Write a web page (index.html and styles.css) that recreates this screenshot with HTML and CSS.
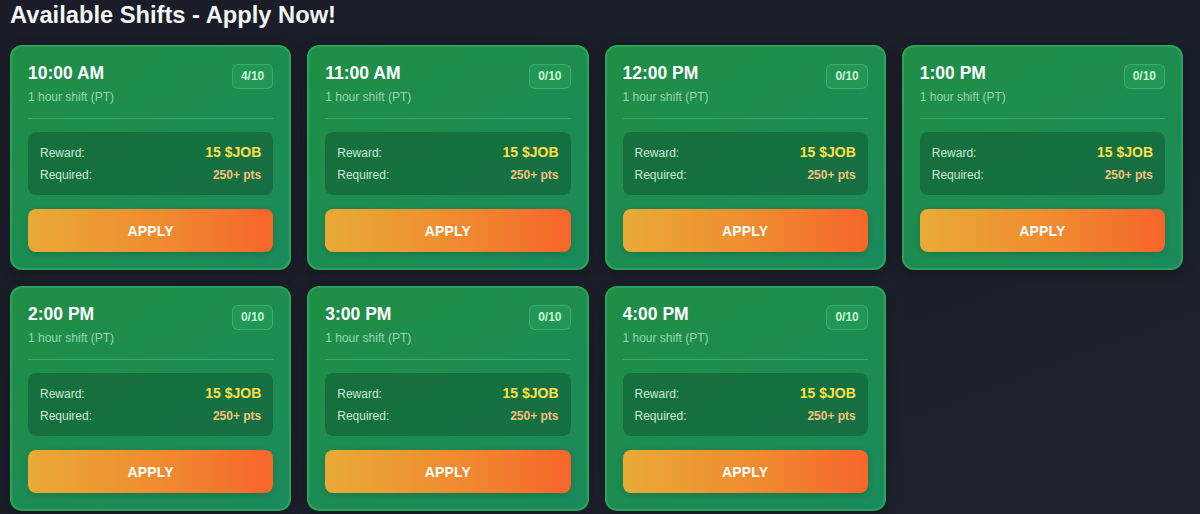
FILE: index.html
```html
<!DOCTYPE html>
<html lang="en">
<head>
<meta charset="utf-8">
<title>Available Shifts</title>
<link rel="stylesheet" href="styles.css">
</head>
<body>
<main class="page">
  <h1 class="page-title">Available Shifts - Apply Now!</h1>
  <section class="shift-grid">
    <article class="shift-card">
      <header class="shift-head">
        <div><h2 class="shift-time">10:00 AM</h2><p class="shift-sub">1 hour shift (PT)</p></div>
        <span class="shift-badge">4/10</span>
      </header>
      <div class="shift-info">
        <div class="info-row"><span class="info-label">Reward:</span><span class="info-reward">15 $JOB</span></div>
        <div class="info-row"><span class="info-label">Required:</span><span class="info-req">250+ pts</span></div>
      </div>
      <button class="apply-btn">APPLY</button>
    </article>
    <article class="shift-card">
      <header class="shift-head">
        <div><h2 class="shift-time">11:00 AM</h2><p class="shift-sub">1 hour shift (PT)</p></div>
        <span class="shift-badge">0/10</span>
      </header>
      <div class="shift-info">
        <div class="info-row"><span class="info-label">Reward:</span><span class="info-reward">15 $JOB</span></div>
        <div class="info-row"><span class="info-label">Required:</span><span class="info-req">250+ pts</span></div>
      </div>
      <button class="apply-btn">APPLY</button>
    </article>
    <article class="shift-card">
      <header class="shift-head">
        <div><h2 class="shift-time">12:00 PM</h2><p class="shift-sub">1 hour shift (PT)</p></div>
        <span class="shift-badge">0/10</span>
      </header>
      <div class="shift-info">
        <div class="info-row"><span class="info-label">Reward:</span><span class="info-reward">15 $JOB</span></div>
        <div class="info-row"><span class="info-label">Required:</span><span class="info-req">250+ pts</span></div>
      </div>
      <button class="apply-btn">APPLY</button>
    </article>
    <article class="shift-card">
      <header class="shift-head">
        <div><h2 class="shift-time">1:00 PM</h2><p class="shift-sub">1 hour shift (PT)</p></div>
        <span class="shift-badge">0/10</span>
      </header>
      <div class="shift-info">
        <div class="info-row"><span class="info-label">Reward:</span><span class="info-reward">15 $JOB</span></div>
        <div class="info-row"><span class="info-label">Required:</span><span class="info-req">250+ pts</span></div>
      </div>
      <button class="apply-btn">APPLY</button>
    </article>
    <article class="shift-card">
      <header class="shift-head">
        <div><h2 class="shift-time">2:00 PM</h2><p class="shift-sub">1 hour shift (PT)</p></div>
        <span class="shift-badge">0/10</span>
      </header>
      <div class="shift-info">
        <div class="info-row"><span class="info-label">Reward:</span><span class="info-reward">15 $JOB</span></div>
        <div class="info-row"><span class="info-label">Required:</span><span class="info-req">250+ pts</span></div>
      </div>
      <button class="apply-btn">APPLY</button>
    </article>
    <article class="shift-card">
      <header class="shift-head">
        <div><h2 class="shift-time">3:00 PM</h2><p class="shift-sub">1 hour shift (PT)</p></div>
        <span class="shift-badge">0/10</span>
      </header>
      <div class="shift-info">
        <div class="info-row"><span class="info-label">Reward:</span><span class="info-reward">15 $JOB</span></div>
        <div class="info-row"><span class="info-label">Required:</span><span class="info-req">250+ pts</span></div>
      </div>
      <button class="apply-btn">APPLY</button>
    </article>
    <article class="shift-card">
      <header class="shift-head">
        <div><h2 class="shift-time">4:00 PM</h2><p class="shift-sub">1 hour shift (PT)</p></div>
        <span class="shift-badge">0/10</span>
      </header>
      <div class="shift-info">
        <div class="info-row"><span class="info-label">Reward:</span><span class="info-reward">15 $JOB</span></div>
        <div class="info-row"><span class="info-label">Required:</span><span class="info-req">250+ pts</span></div>
      </div>
      <button class="apply-btn">APPLY</button>
    </article>
  </section>
</main>
</body>
</html>
```
FILE: styles.css
```css
* { box-sizing: border-box; }
html, body { margin: 0; padding: 0; }
body {
  background: linear-gradient(160deg, #1a1d27 0%, #1b1f2a 60%, #1d222c 100%);
  min-height: 514px;
  font-family: "Liberation Sans", Arial, sans-serif;
  color: #fff;
  overflow: hidden;
}
.page { padding: 1px 0 0 10px; width: 1183px; }
.page-title {
  margin: 0 0 16px;
  font-size: 23.7px;
  font-weight: 700;
  line-height: 28px;
  color: #f5f6f8;
}
.shift-grid {
  display: grid;
  grid-template-columns: repeat(4, 1fr);
  gap: 16px;
}
.shift-card {
  background: linear-gradient(150deg, #1f8f45 0%, #1d8c50 50%, #1b8a5b 100%);
  border: 2px solid #2aa45c;
  border-radius: 12px;
  padding: 16px;
  display: flex;
  flex-direction: column;
  box-shadow: 0 4px 12px rgba(0,0,0,0.25);
}
.shift-head {
  display: flex;
  justify-content: space-between;
  align-items: flex-start;
  padding-bottom: 14px;
  border-bottom: 1px solid rgba(134, 239, 172, 0.28);
  margin-bottom: 13px;
}
.shift-time {
  margin: 0;
  font-size: 17.5px;
  font-weight: 700;
  line-height: 21px;
  color: #fff;
}
.shift-sub {
  margin: 6px 0 0;
  font-size: 12px;
  line-height: 14px;
  color: rgba(214, 245, 224, 0.7);
}
.shift-badge {
  margin-top: 1px;
  padding: 4px 8px;
  font-size: 12px;
  font-weight: 700;
  line-height: 15px;
  color: #c8f7d6;
  background: rgba(74, 222, 128, 0.12);
  border: 1px solid rgba(134, 239, 172, 0.25);
  border-radius: 6px;
}
.shift-info {
  background: rgba(10, 60, 35, 0.35);
  border-radius: 8px;
  padding: 12px;
  display: flex;
  flex-direction: column;
  gap: 6px;
}
.info-row {
  display: flex;
  justify-content: space-between;
  align-items: baseline;
  line-height: 16px;
}
.info-label { font-size: 12px; color: #cfe9d8; }
.info-reward { font-size: 14px; font-weight: 700; color: #fde047; }
.info-req { font-size: 12px; font-weight: 700; color: #f4c27c; }
.apply-btn {
  margin-top: 14px;
  height: 43px;
  border: none;
  border-radius: 8px;
  background: linear-gradient(90deg, #e9aa36 0%, #f08a30 55%, #f7652b 100%);
  color: #fff;
  font-family: "Liberation Sans", Arial, sans-serif;
  font-size: 14px;
  font-weight: 700;
  letter-spacing: 0.2px;
  cursor: pointer;
  box-shadow: 0 2px 6px rgba(0,0,0,0.15);
}
```
